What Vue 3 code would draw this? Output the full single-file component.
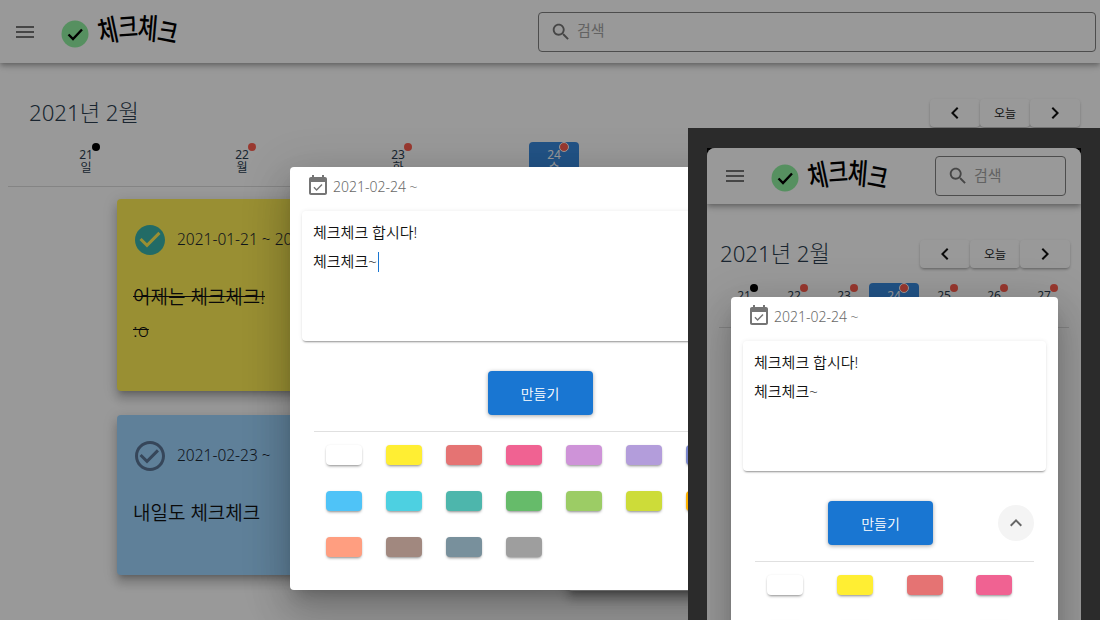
<script setup>
const icons = {
  menu: 'M3 18h18v-2H3v2zm0-5h18v-2H3v2zm0-7v2h18V6H3z',
  search: 'M15.5 14h-.79l-.28-.27C15.41 12.59 16 11.11 16 9.5 16 5.91 13.09 3 9.5 3S3 5.91 3 9.5 5.91 16 9.5 16c1.61 0 3.09-.59 4.23-1.57l.27.28v.79l5 4.99L20.49 19l-4.99-5zm-6 0C7.01 14 5 11.99 5 9.5S7.01 5 9.5 5 14 7.01 14 9.5 11.99 14 9.5 14z',
  left: 'M15.41 7.41L14 6l-6 6 6 6 1.41-1.41L10.83 12z',
  right: 'M10 6L8.59 7.41 13.17 12l-4.58 4.59L10 18l6-6z',
  up: 'M12 8l-6 6 1.41 1.41L12 10.83l4.59 4.58L18 14z',
  event: 'M16.53 11.06L15.47 10l-4.88 4.88-2.12-2.12-1.06 1.06L10.59 17l5.94-5.94zM19 3h-1V1h-2v2H8V1H6v2H5c-1.11 0-1.99.9-1.99 2L3 19c0 1.1.89 2 2 2h14c1.1 0 2-.9 2-2V5c0-1.1-.9-2-2-2zm0 16H5V8h14v11z',
  done: 'M12 2C6.48 2 2 6.48 2 12s4.48 10 10 10 10-4.48 10-10S17.52 2 12 2zm-2 15l-5-5 1.41-1.41L10 14.17l7.59-7.59L19 8l-9 9z',
  todo: 'M16.59 7.58L10 14.17l-3.59-3.58L5 12l5 5 8-8zM12 2C6.48 2 2 6.48 2 12s4.48 10 10 10 10-4.48 10-10S17.52 2 12 2zm0 18c-4.42 0-8-3.58-8-8s3.58-8 8-8 8 3.58 8 8-3.58 8-8 8z',
}

const days = [
  { num: 21, name: '일', done: true },
  { num: 22, name: '월' },
  { num: 23, name: '화' },
  { num: 24, name: '수', today: true },
  { num: 25, name: '목' },
  { num: 26, name: '금' },
  { num: 27, name: '토' },
]

const logoLetters = ['체', '크', '체', '크']

const swatches = [
  '#ffffff', '#ffee33', '#e57373', '#f06292', '#ce93d8', '#b39ddb', '#7986cb', '#64b5f6',
  '#4fc3f7', '#4dd0e1', '#4db6ac', '#66bb6a', '#9ccc65', '#cddc39', '#ffb300', '#ffb74d',
  '#ff9e80', '#a1887f', '#78909c', '#9e9e9e',
]

const desktopCards = [
  { id: 1, color: '#ffee55', date: '2021-01-21 ~ 2021-01-22', lines: ['어제는 체크체크!', ':o'], done: true },
  { id: 2, color: '#ffffff', date: '2021-02-22 ~', lines: ['체크체크'] },
  { id: 3, color: '#9ed5ff', date: '2021-02-23 ~', lines: ['내일도 체크체크'] },
  { id: 4, color: '#ffffff', date: '2021-02-24 ~', lines: ['체크체크'], tall: true },
]

const views = [
  { name: 'desktop', cards: desktopCards, caret: true },
  { name: 'mobile', cards: [], caret: false },
]
</script>

<template>
  <div class="stage">
    <template v-for="view in views" :key="view.name">
      <component :is="view.name === 'mobile' ? 'div' : 'section'" :class="view.name === 'mobile' ? 'phone' : 'browser'">
        <div class="screen" :class="view.name">
          <header class="appbar">
            <svg class="menu" viewBox="0 0 24 24"><path :d="icons.menu" /></svg>
            <div class="logo">
              <svg class="logo-mark" viewBox="0 0 28 28">
                <circle cx="14" cy="14" r="13.5" />
                <path d="M7.5 14.5l4.5 4.5 9-9.5" />
              </svg>
              <span class="logo-text">
                <span v-for="(ch, i) in logoLetters" :key="i" :class="'letter l' + i">{{ ch }}</span>
              </span>
            </div>
            <div class="search">
              <svg viewBox="0 0 24 24"><path :d="icons.search" /></svg>
              <span>검색</span>
            </div>
          </header>

          <div class="page">
            <div class="title-row">
              <h1>2021년 2월</h1>
              <div class="nav">
                <button><svg viewBox="0 0 24 24"><path :d="icons.left" /></svg></button>
                <button class="today-btn">오늘</button>
                <button><svg viewBox="0 0 24 24"><path :d="icons.right" /></svg></button>
              </div>
            </div>

            <div class="week">
              <div v-for="d in days" :key="d.num" class="day">
                <div class="day-box" :class="{ today: d.today }">
                  <span class="dot" :class="{ black: d.done }"></span>
                  <div>{{ d.num }}</div>
                  <div>{{ d.name }}</div>
                </div>
              </div>
            </div>

            <div v-if="view.cards.length" class="cards">
              <article
                v-for="card in view.cards"
                :key="card.id"
                class="card"
                :class="{ tall: card.tall, finished: card.done }"
                :style="{ backgroundColor: card.color }"
              >
                <div class="card-head">
                  <svg viewBox="0 0 24 24"><path :d="card.done ? icons.done : icons.todo" /></svg>
                  <span>{{ card.date }}</span>
                </div>
                <p v-for="line in card.lines" :key="line">{{ line }}</p>
              </article>
            </div>
          </div>

          <div class="overlay">
            <div class="dialog">
              <div class="dialog-date">
                <svg viewBox="0 0 24 24"><path :d="icons.event" /></svg>
                <span>2021-02-24 ~</span>
              </div>
              <div class="note">
                <div>체크체크 합시다!</div>
                <div>체크체크~<span v-if="view.caret" class="caret"></span></div>
              </div>
              <div class="actions">
                <button class="create">만들기</button>
                <button class="collapse"><svg viewBox="0 0 24 24"><path :d="icons.up" /></svg></button>
              </div>
              <div class="palette">
                <div v-for="c in swatches" :key="c" class="cell">
                  <span class="swatch" :style="{ backgroundColor: c }"></span>
                </div>
              </div>
            </div>
          </div>
        </div>
      </component>
    </template>
  </div>
</template>

<style scoped>
.stage {
  position: relative;
  width: 1100px;
  height: 620px;
  overflow: hidden;
  background: #fff;
  font-family: "Noto Sans", "Noto Sans CJK KR", sans-serif;
  color: #2c3e50;
}

.browser {
  width: 100%;
  height: 100%;
}

.phone {
  position: absolute;
  left: 688px;
  top: 128px;
  width: 412px;
  height: 492px;
  box-sizing: border-box;
  padding: 20px 19px 0;
  background: linear-gradient(#000, #000) 19px 20px / 374px 10px no-repeat, #2b2b2b;
}

.screen {
  position: relative;
  height: 100%;
  overflow: hidden;
  background: #fff;
}

.mobile {
  border-radius: 8px 8px 0 0;
}

/* app bar */
.appbar {
  display: flex;
  align-items: center;
  height: 63px;
  padding-left: 13px;
  box-shadow: 0 2px 4px -1px rgba(0, 0, 0, .2), 0 4px 5px rgba(0, 0, 0, .14), 0 1px 10px rgba(0, 0, 0, .12);
  position: relative;
}

.mobile .appbar {
  height: 56px;
  padding-left: 16px;
}

.menu {
  width: 24px;
  height: 24px;
  fill: #757575;
}

.logo {
  display: flex;
  align-items: center;
  margin: 4px 0 0 24px;
}

.logo-mark {
  width: 28px;
  height: 28px;
}

.logo-mark circle {
  fill: #90f0a0;
}

.logo-mark path {
  fill: none;
  stroke: #000;
  stroke-width: 2.4;
}

.logo-text {
  display: flex;
  margin: -9px 0 0 7px;
  color: #000;
  font-size: 27px;
  font-weight: 500;
  line-height: 30px;
}

.letter {
  display: inline-block;
  width: 20px;
  text-align: center;
}

.l0 { transform: translateY(2px) rotate(-12deg) scale(.8, 1.1); }
.l1 { transform: translateY(-2px) rotate(-4deg) scale(.8, 1); }
.l2 { transform: translateY(-1px) rotate(5deg) scale(.8, 1.1); }
.l3 { transform: translateY(3px) rotate(11deg) scale(.8, 1); }

.search {
  display: flex;
  align-items: center;
  box-sizing: border-box;
  width: 558px;
  height: 40px;
  margin: 0 4px 0 auto;
  padding: 0 0 0 11px;
  border: 1px solid #808080;
  border-radius: 4px;
  font-size: 15px;
  color: #a4a4a4;
}

.search span {
  margin-bottom: 4px;
}

.mobile .search {
  width: 131px;
  margin-right: 15px;
}

.search svg {
  width: 22px;
  height: 22px;
  margin-right: 5px;
  fill: #757575;
}

/* calendar part */
.page {
  padding-top: 36px;
}

.title-row {
  display: flex;
  align-items: center;
  justify-content: space-between;
  height: 28px;
  padding: 0 20px 0 29px;
}

.mobile .title-row {
  padding: 0 11px 0 13px;
}

h1 {
  margin: 0;
  font-size: 22.2px;
  font-weight: 300;
  line-height: 28px;
}

.nav {
  display: flex;
}

.nav button {
  display: flex;
  align-items: center;
  justify-content: center;
  width: 50px;
  height: 28px;
  padding: 0;
  border: 0;
  border-radius: 4px;
  background: #fff;
  box-shadow: 0 2px 3px -1px rgba(0, 0, 0, .3), 0 1px 3px rgba(0, 0, 0, .12);
  font-family: inherit;
  font-size: 12px;
  color: #222;
}

.nav svg {
  width: 24px;
  height: 24px;
  fill: #111;
}

.week {
  display: grid;
  grid-template-columns: repeat(7, 156px);
  margin: 15px 0 0 8px;
  padding-bottom: 8px;
  border-bottom: 1px solid #ddd;
}

.mobile .week {
  grid-template-columns: repeat(7, 50px);
  width: 350px;
  margin-left: 12px;
}

.day {
  display: flex;
  justify-content: center;
}

.day-box {
  position: relative;
  box-sizing: border-box;
  width: 50px;
  height: 36px;
  padding-top: 6px;
  border-radius: 4px 4px 0 0;
  font-size: 12px;
  line-height: 13px;
  text-align: center;
}

.day-box.today {
  background: #3a8ae0;
  color: #fff;
}

.dot {
  position: absolute;
  top: 1px;
  left: 31px;
  width: 8px;
  height: 8px;
  border-radius: 50%;
  background: #ff6050;
}

.dot.black {
  background: #000;
}

.today .dot {
  top: 0;
  left: 30px;
  border: 1px solid #fff;
}

.cards {
  display: grid;
  grid-template-columns: 427px 427px;
  gap: 24px;
  align-items: start;
  margin: 12px 0 0 117px;
}

.card {
  box-sizing: border-box;
  min-height: 160px;
  padding: 23px 15px 44px;
  border-radius: 4px;
  box-shadow: 0 5px 5px -3px rgba(0, 0, 0, .2), 0 8px 10px 1px rgba(0, 0, 0, .14), 0 3px 14px 2px rgba(0, 0, 0, .12);
}

.card.tall {
  min-height: 176px;
}

.card-head {
  display: flex;
  align-items: center;
  margin-bottom: 23px;
  font-size: 15.5px;
  font-weight: 350;
  color: #1a2530;
  white-space: nowrap;
}

.card-head span {
  margin-bottom: 2px;
}

.card-head svg {
  flex: none;
  width: 36px;
  height: 36px;
  margin-right: 9px;
  fill: #5a7696;
}

.finished .card-head svg {
  fill: #3ab2aa;
}

.card p {
  margin: 0 0 0 1px;
  font-size: 19px;
  line-height: 33px;
  font-weight: 350;
  color: #111;
}

.finished p {
  text-decoration: line-through;
}

/* dialog */
.overlay {
  position: absolute;
  inset: 0;
  box-sizing: border-box;
  padding: 167px 0 0 290px;
  background: rgba(0, 0, 0, .4);
}

.mobile .overlay {
  padding: 149px 0 0 24px;
}

.dialog {
  box-sizing: border-box;
  width: 528px;
  height: 423px;
  border-radius: 4px;
  background: #fff;
  box-shadow: 0 11px 15px -7px rgba(0, 0, 0, .2), 0 24px 38px 3px rgba(0, 0, 0, .14), 0 9px 46px 8px rgba(0, 0, 0, .12);
}

.mobile .dialog {
  width: 327px;
}

.dialog-date {
  display: flex;
  align-items: center;
  height: 38px;
  margin-bottom: 6px;
  padding-left: 16px;
  font-size: 14px;
  font-weight: 350;
  color: #6a6a6a;
}

.dialog-date svg {
  width: 24px;
  height: 24px;
  margin-right: 3px;
  fill: #757575;
}

.note {
  box-sizing: border-box;
  height: 130px;
  margin: 0 12px;
  padding: 7px 11px;
  border-radius: 4px;
  box-shadow: 0 2px 2px -1px rgba(0, 0, 0, .4), 0 0 4px rgba(0, 0, 0, .08);
  font-size: 15px;
  font-weight: 350;
  line-height: 29px;
  color: #111;
}

.caret {
  display: inline-block;
  width: 1px;
  height: 20px;
  margin-left: 1px;
  vertical-align: -5px;
  background: #1976d2;
}

.actions {
  display: grid;
  grid-template-columns: 1fr 36px;
  align-items: center;
  margin: 30px 24px 0;
}

.create {
  justify-self: center;
  width: 105px;
  height: 44px;
  margin-left: 8px;
  border: 0;
  border-radius: 4px;
  background: #1976d2;
  box-shadow: 0 1px 4px rgba(0, 0, 0, .35);
  font-family: inherit;
  font-size: 14px;
  font-weight: 350;
  color: #fff;
}

.collapse {
  display: flex;
  align-items: center;
  justify-content: center;
  width: 36px;
  height: 36px;
  padding: 0;
  border: 0;
  border-radius: 50%;
  background: #f4f4f4;
}

.collapse svg {
  width: 24px;
  height: 24px;
  fill: #666;
}

.palette {
  display: grid;
  grid-template-columns: repeat(8, 60px);
  grid-auto-rows: 46px;
  margin: 16px 24px 0;
  padding-top: 13px;
  border-top: 1px solid #e0e0e0;
}

.mobile .palette {
  grid-template-columns: repeat(4, 69.75px);
}

.cell {
  padding-left: 12px;
}

.swatch {
  display: block;
  width: 36px;
  height: 20px;
  border-radius: 4px;
  box-shadow: 0 2px 3px -1px rgba(0, 0, 0, .45), 0 0 2px rgba(0, 0, 0, .08);
}
</style>

<style>
html, body {
  margin: 0;
  background: #fff;
}
</style>
